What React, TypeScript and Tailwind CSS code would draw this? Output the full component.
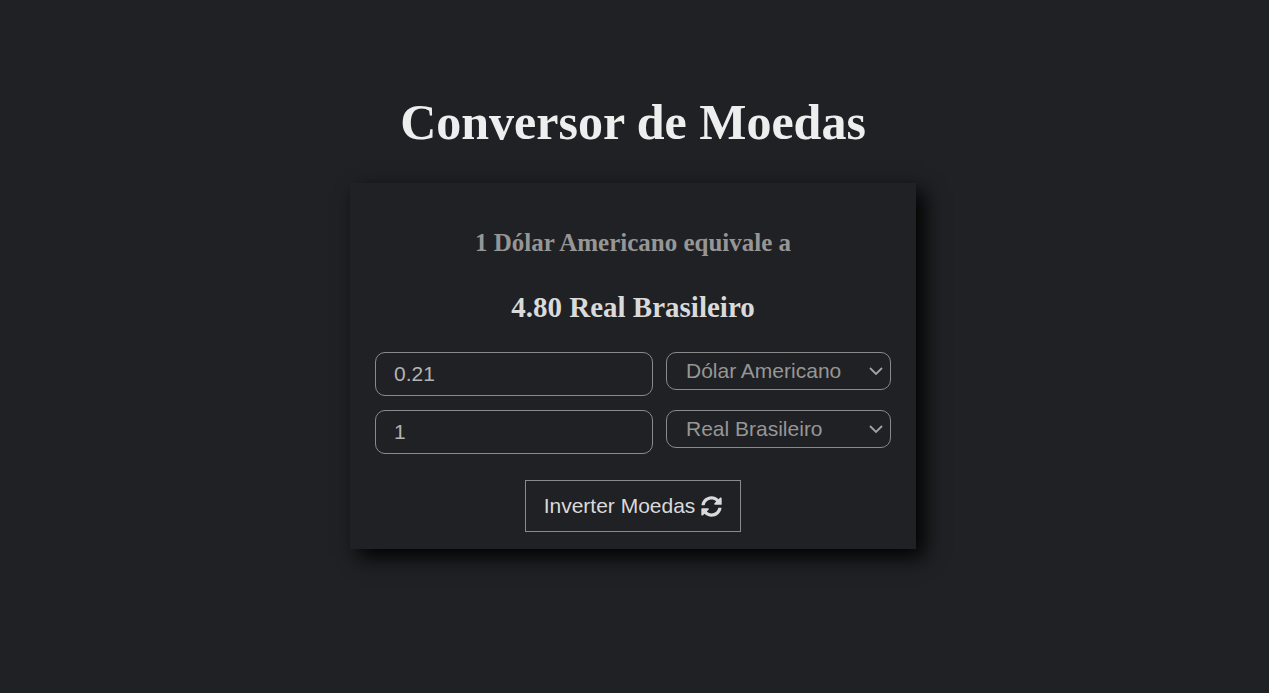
import { useState } from "react";
import { FaSyncAlt } from "react-icons/fa";

const currencies = ["Dólar Americano", "Real Brasileiro", "Euro"];

type RowProps = {
  id: string;
  amount: string;
  currency: string;
  onAmount: (value: string) => void;
  onCurrency: (value: string) => void;
};

function CurrencyRow({ id, amount, currency, onAmount, onCurrency }: RowProps) {
  return (
    <div className="flex items-start gap-[13px]">
      <input
        id={`${id}-amount`}
        aria-label={`Valor em ${currency}`}
        value={amount}
        onChange={(e) => onAmount(e.target.value)}
        className="h-11 min-w-0 flex-1 rounded-[10px] border border-[#8a8a8a] bg-transparent px-[18px] text-[21px] text-[#b3b3b3] outline-none"
      />
      <div className="grid w-[225px] items-center">
        <select
          id={`${id}-currency`}
          aria-label="Moeda"
          value={currency}
          onChange={(e) => onCurrency(e.target.value)}
          className="col-start-1 row-start-1 h-[38px] w-full appearance-none rounded-[10px] border border-[#8a8a8a] bg-[#202124] pr-8 pl-[19px] text-[21px] text-[#969696] outline-none"
        >
          {currencies.map((name) => (
            <option key={name}>{name}</option>
          ))}
        </select>
        <svg
          aria-hidden="true"
          viewBox="0 0 14 8"
          className="pointer-events-none col-start-1 row-start-1 mr-2 h-2 w-3.5 justify-self-end"
          fill="none"
          stroke="#a3a3a3"
          strokeWidth="1.8"
        >
          <path d="M1 1l6 6 6-6" />
        </svg>
      </div>
    </div>
  );
}

export default function App() {
  const [from, setFrom] = useState({ amount: "0.21", currency: "Dólar Americano" });
  const [to, setTo] = useState({ amount: "1", currency: "Real Brasileiro" });

  const invert = () => {
    setFrom(to);
    setTo(from);
  };

  return (
    <main className="flex min-h-screen flex-col items-center bg-[#202124] pt-[94px] pr-[3px] font-['Liberation_Sans',Arial,sans-serif]">
      <h1 className="font-['Liberation_Serif',serif] text-[50px] leading-[56px] font-bold text-[#eeeeee]">
        Conversor de Moedas
      </h1>
      <section className="mt-[33px] flex w-full max-w-[566px] flex-col items-center px-[25px] pt-[45px] pb-[17px] shadow-[8px_8px_20px_#000]">
        <h2 className="font-['Liberation_Serif',serif] text-[25px] leading-[30px] font-bold text-[#969696]">
          1 {from.currency} equivale a
        </h2>
        <h3 className="mt-8 font-['Liberation_Serif',serif] text-[29px] leading-[34px] font-bold text-[#dadada]">
          4.80 {to.currency}
        </h3>
        <div className="mt-7 flex w-full flex-col gap-3.5">
          <CurrencyRow
            id="from"
            amount={from.amount}
            currency={from.currency}
            onAmount={(amount) => setFrom({ ...from, amount })}
            onCurrency={(currency) => setFrom({ ...from, currency })}
          />
          <CurrencyRow
            id="to"
            amount={to.amount}
            currency={to.currency}
            onAmount={(amount) => setTo({ ...to, amount })}
            onCurrency={(currency) => setTo({ ...to, currency })}
          />
        </div>
        <button
          type="button"
          onClick={invert}
          className="mt-[26px] flex h-[52px] items-center gap-1.5 border border-[#8a8a8a] px-[18px] text-[21px] text-[#dadada]"
        >
          Inverter Moedas
          <FaSyncAlt aria-hidden="true" className="size-[21px]" />
        </button>
      </section>
    </main>
  );
}
